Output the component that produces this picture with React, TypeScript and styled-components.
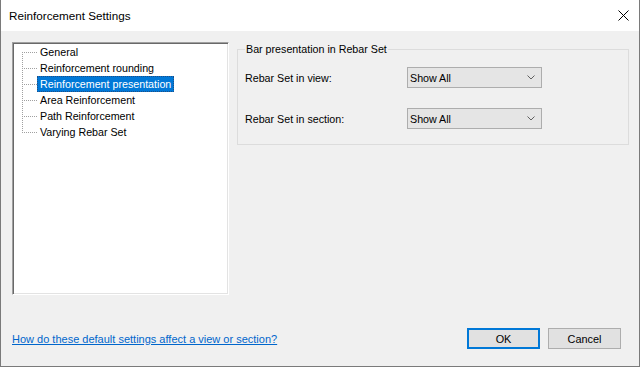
import React, { useState } from 'react';
import styled, { createGlobalStyle } from 'styled-components';

const GlobalStyle = createGlobalStyle`
  html, body {
    margin: 0;
    padding: 0;
    background: #ffffff;
    overflow: hidden;
  }
  body {
    font-family: "Liberation Sans", Arial, sans-serif;
    color: #000;
  }
`;

const Dialog = styled.div`
  width: 640px;
  height: 367px;
  box-sizing: border-box;
  display: flex;
  flex-direction: column;
  border-left: 1px solid #7a7a7a;
  border-right: 1px solid #7a7a7a;
  border-bottom: 1px solid #7a7a7a;
  background: #f0f0f0;
`;

const TitleBar = styled.div`
  height: 31px;
  flex: none;
  display: flex;
  align-items: center;
  justify-content: space-between;
  background: #ffffff;
  padding: 0 9px 0 8px;
  font-size: 11.7px;
`;

const CloseButton = styled.button`
  width: 12px;
  height: 12px;
  padding: 0;
  margin-right: 1px;
  border: none;
  background: transparent;
  display: flex;
  align-items: center;
  justify-content: center;
`;

const Body = styled.div`
  flex: 1;
  display: flex;
  flex-direction: column;
  justify-content: space-between;
  padding: 11px 10px 17px 11px;
  font-size: 10.7px;
`;

const TopArea = styled.div`
  display: flex;
  align-items: flex-start;
  gap: 8px;
`;

const TreeBox = styled.div`
  width: 217px;
  height: 253px;
  box-sizing: border-box;
  flex: none;
  background: #ffffff;
  border-style: solid;
  border-width: 1px;
  border-color: #a0a0a0 #ffffff #ffffff #a0a0a0;
  box-shadow: inset 1px 1px 0 #696969, inset -1px -1px 0 #e3e3e3;
  padding: 1px 0 0 1px;
`;

const TreeRow = styled.div<{ $first?: boolean; $last?: boolean }>`
  position: relative;
  height: 16px;
  display: flex;
  align-items: center;
  padding-left: 23px;

  &::before {
    content: '';
    position: absolute;
    left: 8px;
    top: 8px;
    width: 15px;
    height: 1px;
    background-image: linear-gradient(to right, #a0a0a0 50%, transparent 50%);
    background-size: 2px 1px;
  }

  &::after {
    content: '';
    position: absolute;
    left: 8px;
    width: 1px;
    top: ${({ $first }) => ($first ? '8px' : '0')};
    bottom: ${({ $last }) => ($last ? '8px' : '0')};
    background-image: linear-gradient(to bottom, #a0a0a0 50%, transparent 50%);
    background-size: 1px 2px;
  }
`;

const TreeLabel = styled.span<{ $selected?: boolean }>`
  height: 16px;
  line-height: 16px;
  padding: 0 3px 0 3px;
  white-space: nowrap;
  box-sizing: border-box;
  background: ${({ $selected }) => ($selected ? '#0078d7' : 'transparent')};
  color: ${({ $selected }) => ($selected ? '#ffffff' : '#000000')};
  outline: ${({ $selected }) => ($selected ? '1px dotted #1f4f86' : 'none')};
  outline-offset: -1px;
  cursor: default;
`;

const GroupBox = styled.fieldset`
  flex: 1;
  min-width: 0;
  margin: 0;
  border: 1px solid #dcdcdc;
  padding: 11px 7px 15px 7px;
`;

const Legend = styled.legend`
  padding: 0 1px;
  margin-left: 0;
  line-height: 14px;
`;

const FieldGrid = styled.div`
  display: grid;
  grid-template-columns: 162px 135px;
  row-gap: 20px;
  align-items: center;
`;

const Combo = styled.div`
  height: 21px;
  box-sizing: border-box;
  border: 1px solid #adadad;
  background: #e5e5e5;
  display: flex;
  align-items: center;
  justify-content: space-between;
  padding: 0 6px 0 2px;
`;

const Footer = styled.div`
  display: flex;
  align-items: center;
  justify-content: space-between;
  padding-right: 8px;
`;

const HelpLink = styled.a`
  color: #0066cc;
  font-size: 11px;
  text-decoration: underline;
  cursor: pointer;
`;

const ButtonRow = styled.div`
  display: flex;
  gap: 8px;
`;

const DialogButton = styled.button<{ $default?: boolean }>`
  width: 73px;
  height: 21px;
  box-sizing: border-box;
  background: #e1e1e1;
  border: ${({ $default }) => ($default ? '2px solid #0078d7' : '1px solid #adadad')};
  font-family: "Liberation Sans", Arial, sans-serif;
  font-size: 10.9px;
  color: #000;
  padding: 0;
`;

const Chevron = () => (
  <svg width="8" height="5" viewBox="0 0 8 5">
    <path d="M0.5 0.5 L4 4 L7.5 0.5" fill="none" stroke="#606060" strokeWidth="1" />
  </svg>
);

const items = [
  'General',
  'Reinforcement rounding',
  'Reinforcement presentation',
  'Area Reinforcement',
  'Path Reinforcement',
  'Varying Rebar Set',
];

const App: React.FC = () => {
  const [selected, setSelected] = useState(2);

  return (
    <>
      <GlobalStyle />
      <Dialog>
        <TitleBar>
          <span>Reinforcement Settings</span>
          <CloseButton aria-label="Close">
            <svg width="11" height="11" viewBox="0 0 11 11">
              <path d="M0.5 0.5 L10.5 10.5 M10.5 0.5 L0.5 10.5" stroke="#000" strokeWidth="1" />
            </svg>
          </CloseButton>
        </TitleBar>
        <Body>
          <TopArea>
            <TreeBox>
              {items.map((item, i) => (
                <TreeRow key={item} $first={i === 0} $last={i === items.length - 1}>
                  <TreeLabel $selected={i === selected} onClick={() => setSelected(i)}>
                    {item}
                  </TreeLabel>
                </TreeRow>
              ))}
            </TreeBox>
            <GroupBox>
              <Legend>Bar presentation in Rebar Set</Legend>
              <FieldGrid>
                <span>Rebar Set in view:</span>
                <Combo>
                  <span>Show All</span>
                  <Chevron />
                </Combo>
                <span>Rebar Set in section:</span>
                <Combo>
                  <span>Show All</span>
                  <Chevron />
                </Combo>
              </FieldGrid>
            </GroupBox>
          </TopArea>
          <Footer>
            <HelpLink>How do these default settings affect a view or section?</HelpLink>
            <ButtonRow>
              <DialogButton $default>OK</DialogButton>
              <DialogButton>Cancel</DialogButton>
            </ButtonRow>
          </Footer>
        </Body>
      </Dialog>
    </>
  );
};

export default App;
